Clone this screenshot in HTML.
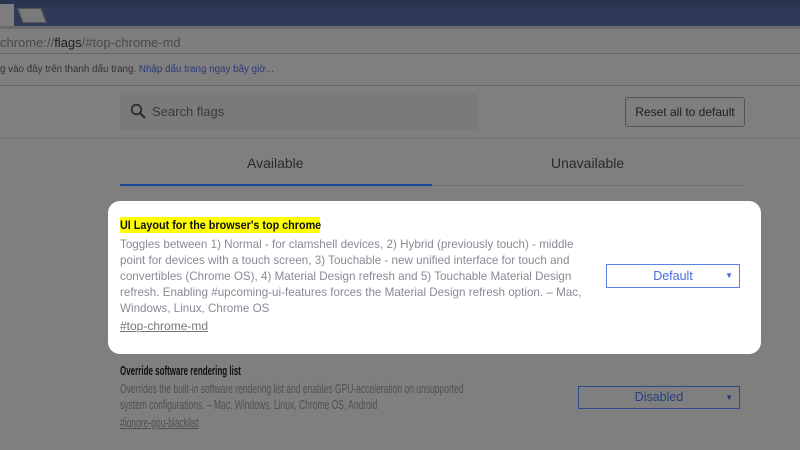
<!DOCTYPE html>
<html><head><meta charset="utf-8"><style>
*{margin:0;padding:0;box-sizing:border-box}
body{width:800px;height:450px;overflow:hidden;background:#7f7f7f;font-family:"Liberation Sans",Arial,sans-serif;position:relative}
.a{position:absolute;white-space:nowrap}
.c{transform:scaleX(0.68);transform-origin:0 0}
</style></head><body>
<div class="a" style="left:0;top:0;width:800px;height:26px;background:#2e3a57"></div>
<div class="a" style="left:0;top:0;width:800px;height:7px;background:#2a3450"></div>
<div class="a" style="left:0;top:4px;width:14px;height:22px;background:#7d7d7d"></div>
<div class="a" style="left:20px;top:8px;width:24px;height:15px;background:#7a7a7a;border:1px solid #555;transform:skewX(20deg)"></div>
<div class="a" style="left:0;top:26px;width:800px;height:3px;background:#6c6c6c"></div>
<div class="a" style="left:0;top:29px;width:800px;height:25px;background:#7e7e7e"></div>
<div class="a" style="left:0;top:35px;font-size:13px;color:#4a4a4a">chrome://<span style="color:#1e1e1e">flags</span>/#top-chrome-md</div>
<div class="a" style="left:0;top:53px;width:800px;height:1px;background:#666"></div>
<div class="a" style="left:0;top:64px;font-size:9.8px;color:#333">g vào đây trên thanh dấu trang. <span style="color:#2a3a7a">Nhập dấu trang ngay bây giờ...</span></div>
<div class="a" style="left:0;top:85px;width:800px;height:1px;background:#666"></div>
<div class="a" style="left:120px;top:93px;width:357px;height:37px;background:#7a7a7a"></div>
<svg class="a" style="left:130px;top:103px" width="16" height="16" viewBox="0 0 16 16"><circle cx="6.5" cy="6.5" r="4.8" fill="none" stroke="#2e2e2e" stroke-width="1.8"/><path d="M10 10l5 5" stroke="#2e2e2e" stroke-width="2"/></svg>
<div class="a" style="left:152px;top:104px;font-size:13px;color:#3a3a3a">Search flags</div>
<div class="a" style="left:625px;top:97px;width:120px;height:30px;border:1px solid #555;border-radius:3px;font-size:12px;color:#1e1e1e;text-align:center;line-height:28px">Reset all to default</div>
<div class="a" style="left:0;top:138px;width:800px;height:1px;background:#737373"></div>
<div class="a" style="left:247px;top:155px;font-size:14px;color:#2a2a2a">Available</div>
<div class="a" style="left:551px;top:155px;font-size:14px;color:#2a2a2a">Unavailable</div>
<div class="a" style="left:120px;top:184px;width:312px;height:2px;background:#1c4a96"></div>
<div class="a" style="left:432px;top:185px;width:312px;height:1px;background:#707070"></div>
<div class="a" style="left:108px;top:201px;width:653px;height:153px;background:#fff;border-radius:12px"></div>
<div class="a" style="left:120px;top:217px;width:200px;height:16px;background:#ffff00"></div>
<div class="a" style="left:120px;top:218px;font-size:12px;color:#111;font-weight:bold;transform:scaleX(0.9);transform-origin:0 0">UI Layout for the browser's top chrome</div>
<div class="a" style="left:120px;top:236px;font-size:12px;line-height:16px;color:#8a8a96;transform:scaleX(0.97);transform-origin:0 0">Toggles between 1) Normal - for clamshell devices, 2) Hybrid (previously touch) - middle<br>point for devices with a touch screen, 3) Touchable - new unified interface for touch and<br>convertibles (Chrome OS), 4) Material Design refresh and 5) Touchable Material Design<br>refresh. Enabling #upcoming-ui-features forces the Material Design refresh option. – Mac,<br>Windows, Linux, Chrome OS</div>
<div class="a" style="left:120px;top:319px;font-size:12px;color:#777;text-decoration:underline">#top-chrome-md</div>
<div class="a" style="left:606px;top:264px;width:134px;height:24px;border:1px solid #5a82e4;font-size:12.5px;color:#4a6be0;text-align:center;line-height:22px">Default<span style="position:absolute;right:6px;font-size:8px">▼</span></div>
<div class="a c" style="left:120px;top:364px;font-size:12.5px;color:#111;font-weight:bold;transform:scaleX(0.64)">Override software rendering list</div>
<div class="a c" style="left:120px;top:381px;font-size:12.5px;line-height:16px;color:#505050">Overrides the built-in software rendering list and enables GPU-acceleration on unsupported<br>system configurations. – Mac, Windows, Linux, Chrome OS, Android</div>
<div class="a c" style="left:120px;top:416px;font-size:12.5px;color:#505050;text-decoration:underline">#ignore-gpu-blacklist</div>
<div class="a" style="left:578px;top:386px;width:162px;height:23px;border:1px solid #2d4a8c;font-size:12.5px;color:#243f80;text-align:center;line-height:21px">Disabled<span style="position:absolute;right:6px;font-size:8px">▼</span></div>
</body></html>
